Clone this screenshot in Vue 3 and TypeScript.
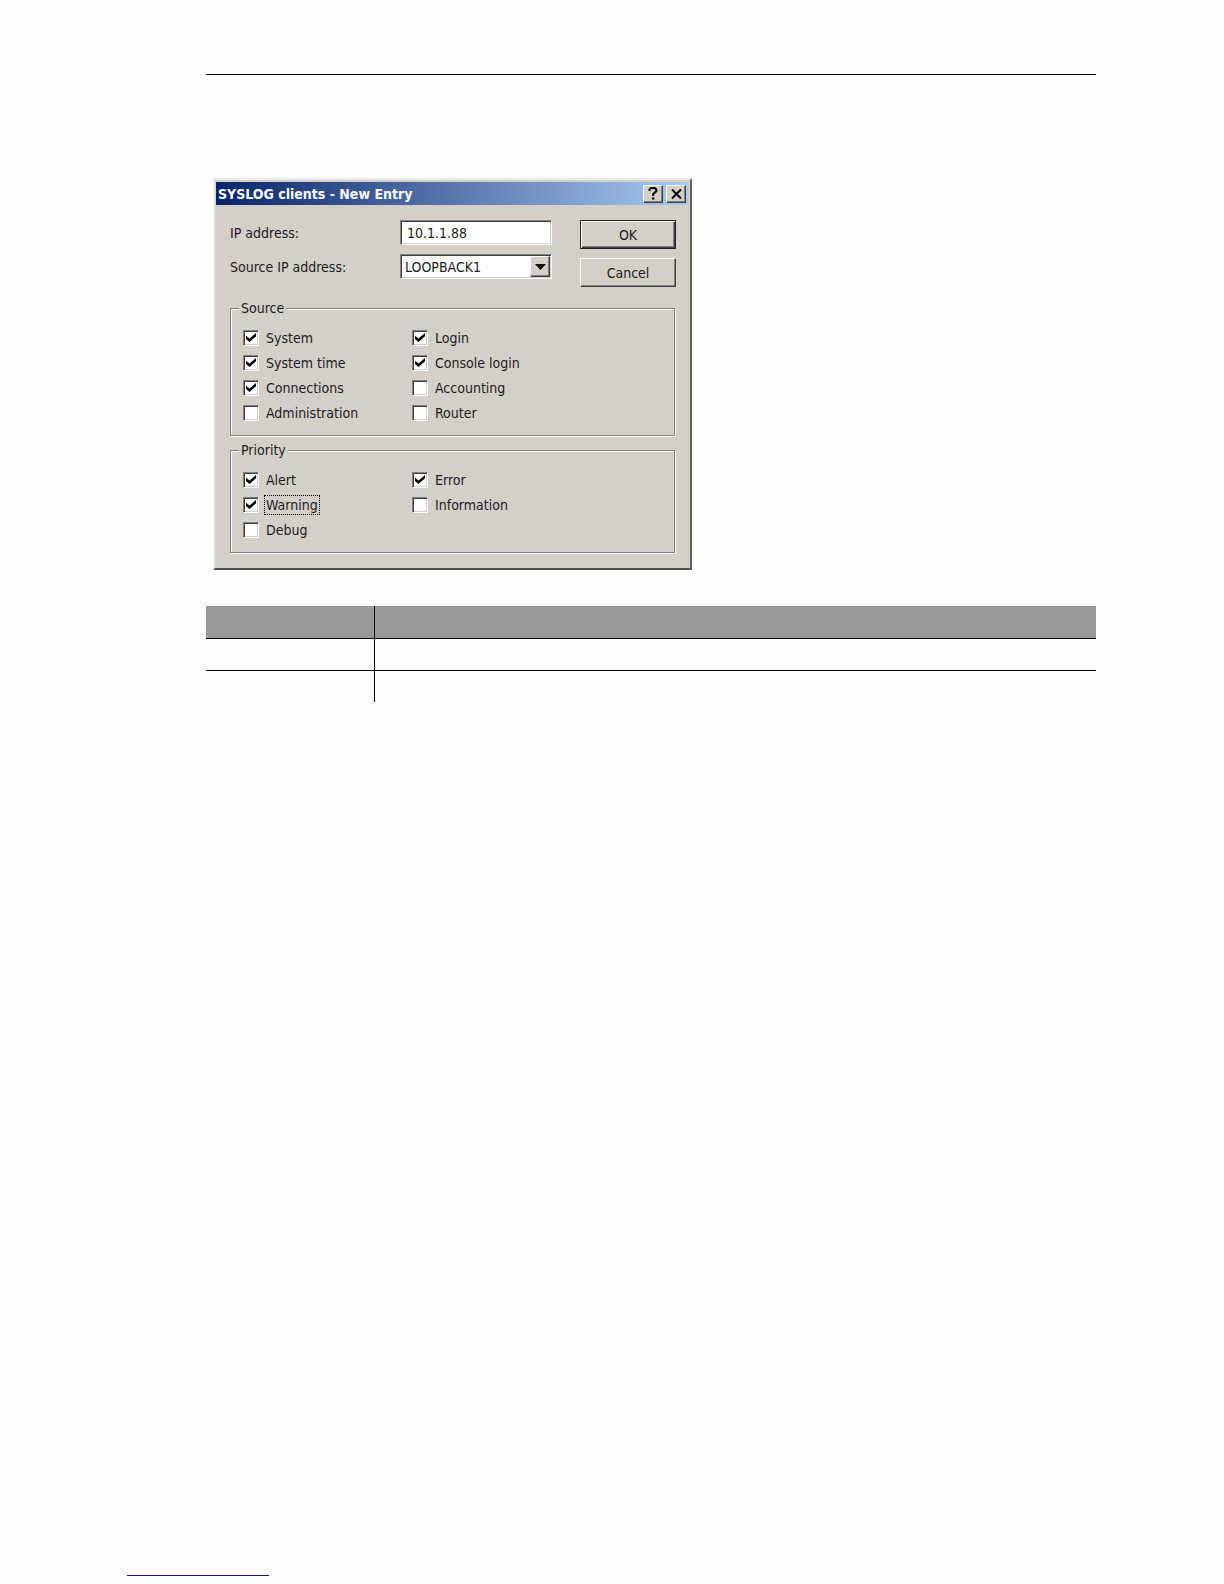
<script setup lang="ts">
import { ref, reactive } from 'vue'

interface Option {
  id: string
  label: string
  checked: boolean
  focused?: boolean
}
interface Group {
  title: string
  options: Option[]
}

const ip = ref('10.1.1.88')
const sourceIp = ref('LOOPBACK1')

const groups = reactive<Group[]>([
  {
    title: 'Source',
    options: [
      { id: 'system', label: 'System', checked: true },
      { id: 'login', label: 'Login', checked: true },
      { id: 'system-time', label: 'System time', checked: true },
      { id: 'console-login', label: 'Console login', checked: true },
      { id: 'connections', label: 'Connections', checked: true },
      { id: 'accounting', label: 'Accounting', checked: false },
      { id: 'administration', label: 'Administration', checked: false },
      { id: 'router', label: 'Router', checked: false },
    ],
  },
  {
    title: 'Priority',
    options: [
      { id: 'alert', label: 'Alert', checked: true },
      { id: 'error', label: 'Error', checked: true },
      { id: 'warning', label: 'Warning', checked: true, focused: true },
      { id: 'information', label: 'Information', checked: false },
      { id: 'debug', label: 'Debug', checked: false },
    ],
  },
])
</script>

<template>
  <div class="page">
    <main class="content">
      <hr class="rule" />

      <form class="dialog" @submit.prevent>
        <header class="titlebar">
          <h1>SYSLOG clients - New Entry</h1>
          <button type="button" class="caption" aria-label="Help">
            <svg width="10" height="13" viewBox="0 0 10 13">
              <path d="M1.5 4V2.5L3 1H6.8L8.3 2.5V4.2L5.2 7V9" fill="none" stroke="#000" stroke-width="2" />
              <path d="M4 10.5h2.4v2H4z" />
            </svg>
          </button>
          <button type="button" class="caption" aria-label="Close">
            <svg width="11" height="10" viewBox="0 0 11 10">
              <path d="M1 .5L10 9.5M10 .5L1 9.5" fill="none" stroke="#000" stroke-width="2" />
            </svg>
          </button>
        </header>

        <div class="body">
          <div class="top">
            <div class="fields">
              <div class="field">
                <label for="ip">IP address:</label>
                <input id="ip" v-model="ip" type="text" class="box" />
              </div>
              <div class="field">
                <label for="source-ip">Source IP address:</label>
                <div class="combo">
                  <select id="source-ip" v-model="sourceIp" class="box">
                    <option>LOOPBACK1</option>
                  </select>
                  <span class="drop" aria-hidden="true">
                    <svg width="11" height="6" viewBox="0 0 11 6"><path d="M0 0h11L5.5 6z" /></svg>
                  </span>
                </div>
              </div>
            </div>
            <div class="actions">
              <button type="submit" class="push default">OK</button>
              <button type="button" class="push">Cancel</button>
            </div>
          </div>

          <fieldset v-for="group in groups" :key="group.title">
            <legend>{{ group.title }}</legend>
            <div class="options">
              <div v-for="option in group.options" :key="option.id" class="option">
                <input :id="option.id" v-model="option.checked" type="checkbox" />
                <label :for="option.id" :class="{ focused: option.focused }">{{ option.label }}</label>
              </div>
            </div>
          </fieldset>
        </div>
      </form>

      <table class="grid">
        <thead>
          <tr><th></th><th></th></tr>
        </thead>
        <tbody>
          <tr><td></td><td></td></tr>
          <tr><td></td><td></td></tr>
        </tbody>
      </table>
    </main>

    <footer class="footer">
      <div class="footer-line"></div>
    </footer>
  </div>
</template>

<style>
body {
  background: #fefefe;
}
</style>

<style scoped>
* {
  box-sizing: border-box;
}

.page {
  display: flex;
  flex-direction: column;
  min-height: 100vh;
  color: #1c1c24;
  font: 14px/18px 'DejaVu Sans Condensed', 'DejaVu Sans', sans-serif;
}

.content {
  flex: 1;
  padding: 74px 128px 0 206px;
}

.rule {
  margin: 0 0 103px;
  border: 0;
  border-top: 1px solid #000;
}

.dialog {
  max-width: 479px;
  margin: 0 0 36px 7px;
  padding: 2px 2px 2px 1px;
  background: #d4d0c8;
  border: 2px solid;
  border-color: #ecebe6 #646464 #505050 #ecebe6;
}

.titlebar {
  display: flex;
  align-items: center;
  gap: 3px;
  height: 23px;
  padding: 0 2px;
  background: linear-gradient(90deg, #0a246a, #a6caf0);
}

h1 {
  flex: 1;
  margin: 0;
  color: #fff;
  font-size: 14px;
  line-height: 18px;
  font-weight: bold;
}

button,
input,
select {
  margin: 0;
  color: inherit;
  font: inherit;
}

.caption,
.push,
.drop {
  display: flex;
  align-items: center;
  justify-content: center;
  padding: 0;
  background: #d4d0c8;
  border: 1px solid;
  border-color: #fff #404040 #404040 #fff;
  box-shadow: inset -1px -1px #808080;
}

.caption {
  width: 20px;
  height: 18px;
}

.body {
  padding: 15px 12px 13px 14px;
}

.top {
  display: flex;
  justify-content: space-between;
  margin-bottom: 12px;
}

.fields,
.actions {
  display: flex;
  flex-direction: column;
  gap: 9px;
}

.field {
  display: flex;
  align-items: center;
  height: 25px;
}

.field label {
  width: 170px;
}

.box {
  width: 152px;
  height: 25px;
  padding: 0 6px;
  background: #fff;
  border: 1px solid;
  border-color: #808080 #fff #fff #808080;
  border-radius: 0;
  box-shadow: inset 1px 1px #404040, inset -1px -1px #d4d0c8;
  outline: none;
}

select.box {
  display: block;
  padding: 0 4px;
  appearance: none;
}

.combo {
  position: relative;
}

.drop {
  position: absolute;
  top: 2px;
  right: 2px;
  width: 20px;
  height: 21px;
  pointer-events: none;
}

.push {
  width: 96px;
  height: 29px;
}

.default {
  border-color: #202020;
  box-shadow: inset 1px 1px #fff, inset -1px -1px #404040, inset -2px -2px #808080;
}

fieldset {
  min-width: 0;
  margin: 0 1px 5px 0;
  padding: 8px 12px 10px;
  border: 1px solid #808080;
  box-shadow: 1px 1px #fff, inset 1px 1px #fff;
}

fieldset:last-child {
  margin-bottom: 0;
}

legend {
  margin-left: -4px;
  padding: 0 2px;
  background: #d4d0c8;
}

.options {
  display: grid;
  grid-template-columns: 169px 1fr;
  grid-auto-rows: 25px;
}

.option {
  display: flex;
  align-items: center;
  gap: 5px;
}

.option label {
  padding: 0 1px;
  border: 1px solid transparent;
}

.option .focused {
  border: 1px dotted #000;
}

.option input {
  display: grid;
  place-items: center;
  width: 16px;
  height: 16px;
  appearance: none;
  background: #fff;
  border: 1px solid;
  border-color: #808080 #fff #fff #808080;
  box-shadow: inset 1px 1px #404040, inset -1px -1px #d4d0c8;
}

.option input:checked::before {
  content: '';
  width: 10px;
  height: 9px;
  background: #000;
  clip-path: polygon(0 30%, 35% 62%, 100% 0, 100% 36%, 35% 100%, 0 68%);
}

.grid {
  width: 100%;
  table-layout: fixed;
  border-spacing: 0;
}

.grid th,
.grid td {
  height: 32px;
  padding: 0;
}

.grid th {
  background: #999;
}

.grid td {
  border-top: 1px solid #000;
}

.grid th:first-child {
  width: 168px;
}

.grid tr > :last-child {
  border-left: 1px solid #000;
}

.footer {
  padding: 0 127px 8px;
}

.footer-line {
  width: 142px;
  border-top: 1px solid #14147c;
}
</style>
